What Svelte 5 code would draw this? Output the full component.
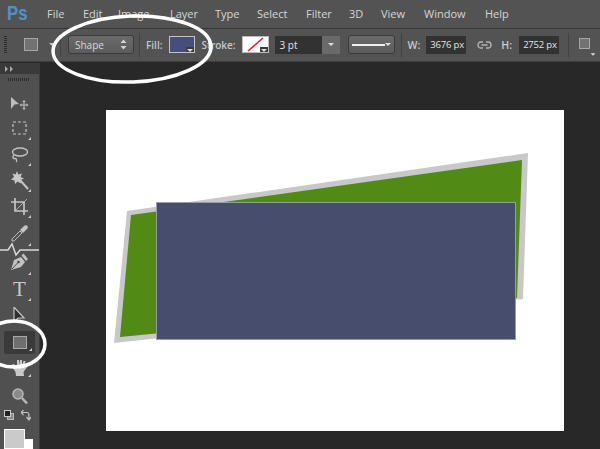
<script>
  const menus = [
    { label: 'File', w: 36 }, { label: 'Edit', w: 35 }, { label: 'Image', w: 52 }, { label: 'Layer', w: 45 },
    { label: 'Type', w: 42 }, { label: 'Select', w: 49 }, { label: 'Filter', w: 43 }, { label: '3D', w: 32 },
    { label: 'View', w: 43 }, { label: 'Window', w: 61 }, { label: 'Help', w: 40 }
  ];
</script>

<div class="app">
  <header class="menubar">
    <span class="logo"><span class="logo-text">Ps</span></span>
    <nav class="menus">
      {#each menus as m}
        <span class="menu" style="width:{m.w}px">{m.label}</span>
      {/each}
    </nav>
  </header>

  <div class="options">
    <span class="grip"></span>
    <span class="shape-preview"></span>
    <span class="caret"></span>
    <span class="sep first"></span>
    <div class="select shape-mode">
      <span>Shape</span>
      <svg width="7" height="11" viewBox="0 0 7 11"><path d="M3.500 0.500 6.500 4H.5ZM3.500 10.500 .5 7H6.500Z" fill="#d4d4d4"/></svg>
    </div>
    <span class="sep mode"></span>
    <span class="lbl fill-lbl">Fill:</span>
    <span class="swatch fill"><i class="corner"></i></span>
    <span class="lbl stroke-lbl">Stroke:</span>
    <span class="swatch stroke">
      <svg width="25" height="15" viewBox="0 0 25 15"><path d="M5 14 20 1" stroke="#d9232e" stroke-width="1.600"/></svg>
      <i class="corner"></i>
    </span>
    <div class="pt">
      <span class="pt-val">3 pt</span>
      <span class="pt-btn"><i class="tri"></i></span>
    </div>
    <div class="select line">
      <span class="line-bar"></span>
      <i class="tri"></i>
    </div>
    <span class="sep dims"></span>
    <span class="lbl w-lbl">W:</span>
    <span class="num">3676 px</span>
    <svg class="link" width="15" height="8" viewBox="0 0 15 8" fill="none" stroke="#b4b4b4" stroke-width="1.400">
      <path d="M6 1H3.500a2.500 3 0 0 0 0 6H6M9 1h2.500a2.500 3 0 0 1 0 6H9M4.500 4h6"/>
    </svg>
    <span class="lbl h-lbl">H:</span>
    <span class="num">2752 px</span>
    <span class="sep last"></span>
    <span class="shape-preview small"></span>
    <i class="tri tiny"></i>
  </div>

  <div class="body">
    <aside class="toolbar">
      <div class="tb-head">
        <svg width="8" height="6" viewBox="0 0 8 6"><path d="M0 0 3 3 0 6ZM5 0 8 3 5 6Z" fill="#a8a8a8"/></svg>
      </div>
      <div class="tb-grip"></div>

      <div class="tool t-move">
        <svg width="18" height="13" viewBox="0 0 18 13" fill="#bcbcbc">
          <path d="M0 0 8 7 3.500 7.500 0 12Z"/>
          <path d="M13 3 14.800 5H13.600V7.400H15.500V6.300L17.500 8 15.500 9.700V8.600H13.600V11H14.800L13 13 11.200 11H12.400V8.600H10.500V9.700L8.500 8 10.500 6.300V7.400H12.400V5H11.200Z"/>
        </svg>
      </div>
      <div class="tool">
        <svg width="15" height="14" viewBox="0 0 15 14" fill="none"><rect x="1" y="1" width="13" height="12" stroke="#c4c4c4" stroke-width="1.200" stroke-dasharray="3 2"/></svg>
        <i class="more"></i>
      </div>
      <div class="tool">
        <svg width="17" height="17" viewBox="0 0 17 17" fill="none" stroke="#c4c4c4" stroke-width="1.300">
          <ellipse cx="9" cy="6" rx="7.500" ry="4"/>
          <path d="M3 9C1 11 2 13 4 12.500 6 12 5 15 6 16"/>
        </svg>
        <i class="more"></i>
      </div>
      <div class="tool">
        <svg width="18" height="19" viewBox="0 0 18 19">
          <path d="M6 0 7.300 3.500 11 2.500 9.500 6 13 7.500 9.500 9 10 12.500 6.500 10.500 4 13 3.500 9.500 0 8.500 3 6 1.500 2.500 4.700 3.500Z" fill="#c8c8c8"/>
          <path d="M9 9 17 18" stroke="#c4c4c4" stroke-width="2"/>
        </svg>
        <i class="more"></i>
      </div>
      <div class="tool">
        <svg width="17" height="17" viewBox="0 0 17 17" fill="none" stroke="#c4c4c4" stroke-width="1.700">
          <path d="M4 0V13H17M0 4H13V17"/><path d="M4 13 13 4M13 4 16 1" stroke-width=".8"/>
        </svg>
        <i class="more"></i>
      </div>
      <div class="tool t-dropper">
        <svg width="17" height="17" viewBox="0 0 17 17">
          <path d="M1 16 1 14 9 6 11 8 3 16Z" fill="none" stroke="#bdbdbd" stroke-width="1"/>
          <path d="M9 5 13 1C14 0 16 0 16.500 1 17 2 17 3 16 4L12 8Z" fill="#c4c4c4"/>
        </svg>
        <i class="more"></i>
      </div>
      <div class="tool t-pen">
        <svg width="17" height="18" viewBox="0 0 17 18">
          <path d="M0 17 3 7 10 4 14 9 10 14Z" fill="#c2c2c2"/>
          <path d="M1 16 7 9.500" stroke="#4a4a4a" stroke-width="1"/>
          <circle cx="7.500" cy="9" r="1.300" fill="#4a4a4a"/>
          <path d="M10.500 2.500 12.500 0.500 17 6 15 8Z" fill="#c2c2c2"/>
        </svg>
        <i class="more"></i>
      </div>
      <div class="tool">
        <span class="t-glyph">T</span>
        <i class="more"></i>
      </div>
      <div class="tool t-path">
        <svg width="13" height="16" viewBox="0 0 13 16"><path d="M1 0V15L5 11 11 11Z" fill="#2e2e2e" stroke="#c4c4c4" stroke-width="1.200"/></svg>
      </div>
      <div class="tool t-rect">
        <span class="rect-icon"></span>
        <i class="more"></i>
      </div>
      <div class="tool t-hand">
        <svg width="18" height="16" viewBox="0 0 18 16">
          <path d="M0 5 3 4 6 7V0H8V5L9 0H11V5L12.500 1H14.500L13.500 6 15.500 4 17.500 5 12.500 12 13 16H5L4.500 12Z" fill="#c8c8c8"/>
        </svg>
        <i class="more"></i>
      </div>
      <div class="tool t-zoom">
        <svg width="16" height="17" viewBox="0 0 16 17">
          <circle cx="6" cy="6" r="5" fill="#8a8a8a" stroke="#b8b8b8" stroke-width="1.500"/>
          <path d="M10 10 15 15.500" stroke="#b8b8b8" stroke-width="2.500"/>
        </svg>
      </div>
      <div class="tool-pair">
        <svg width="10" height="10" viewBox="0 0 10 10"><rect x="3.500" y="3.500" width="6" height="6" fill="#8b8b8b" stroke="#bbb"/><rect x=".5" y=".5" width="6" height="6" fill="#222" stroke="#ccc"/></svg>
        <svg width="10" height="11" viewBox="0 0 10 11" fill="none" stroke="#c4c4c4" stroke-width="1.200"><path d="M0 2.500H6C8 2.500 8 4 8 9M2.500 0 0 2.500 2.500 5M5.500 7 8 10 10 7"/></svg>
      </div>
      <div class="colors">
        <span class="bg-color"></span>
        <span class="fg-color"></span>
      </div>
    </aside>

    <main class="workspace">
      <div class="canvas">
        <svg class="art" width="458" height="321" viewBox="106 110 458 321">
          <path d="M127 211 528 153 523 299 114 343Z" fill="#c8c8c8"/>
          <path d="M131 215 522 160 517 298 120 337Z" fill="#528a16"/>
          <rect x="156.500" y="202.500" width="359" height="137" fill="#474d6d" stroke="#9a9ca4"/>
        </svg>
      </div>
    </main>
  </div>

  <svg class="marks" width="600" height="449" viewBox="0 0 600 449" fill="none" stroke="#fff">
    <ellipse cx="132" cy="49" rx="79" ry="33" stroke-width="3.500" transform="rotate(-2 132 49)"/>
    <path d="M0 250H8L12 244 16 255 20 250H39" stroke="#d8d8d8" stroke-width="1.500"/>
    <ellipse cx="14" cy="344" rx="31" ry="23" stroke-width="3.500"/>
  </svg>
</div>

<style>
:global(body) {
	margin: 0;
	background: #282828;
}
.app {
	position: relative;
	width: 600px;
	height: 449px;
	overflow: hidden;
	display: flex;
	flex-direction: column;
	font-family: "Open Sans", "Liberation Sans", sans-serif;
	color: #d0d0d0;
}
.menubar {
	height: 28px;
	display: flex;
	align-items: center;
	background: #535353;
	border-bottom: 1px solid #383838;
	flex-shrink: 0;
}
.logo {
	width: 47px;
	padding-left: 7px;
	box-sizing: border-box;
	margin-bottom: 2px;
}
.logo-text {
	display: inline-block;
	font: bold 21px "Liberation Sans", sans-serif;
	color: #4f92c9;
	transform: scaleX(.8);
	transform-origin: left center;
}
.menus {
	display: flex;
	margin-bottom: 2px;
}
.menu {
	font-size: 11px;
	color: #d6d6d6;
}
.options {
	height: 33px;
	display: flex;
	align-items: center;
	background: #535353;
	border-bottom: 1px solid #3e3e3e;
	flex-shrink: 0;
	font-size: 10px;
	padding-bottom: 1px;
	box-sizing: border-box;
}
.grip {
	width: 3px;
	height: 18px;
	margin-left: 4px;
	background: repeating-linear-gradient(#2c2c2c 0 1px, transparent 1px 2px);
}
.shape-preview {
	width: 12px;
	height: 11px;
	margin-left: 17px;
	border: 1px solid #a8a8a8;
	background: #727272;
}
.shape-preview.small {
	width: 9px;
	height: 9px;
	margin-left: 10px;
	margin-bottom: 3px;
}
.caret {
	width: 0;
	height: 0;
	margin-left: 11px;
	border: 3px solid transparent;
	border-top: 3px solid #c8c8c8;
	border-bottom: 0;
}
.sep {
	width: 1px;
	height: 24px;
	background: #424242;
}
.sep.first {
	margin: 0 7px 0 5px;
}
.sep.mode {
	margin: 0 6px 0 5px;
}
.sep.dims {
	margin: 0 6px 0 6px;
}
.sep.last {
	margin: 0 0 0 9px;
}
.select {
	display: flex;
	align-items: center;
	justify-content: space-between;
	box-sizing: border-box;
	height: 19px;
	border: 1px solid #3a3a3a;
	border-radius: 3px;
	background: linear-gradient(#6a6a6a, #5c5c5c);
}
.shape-mode {
	width: 66px;
	padding: 0 6px;
	color: #d8d8d8;
	font-size: 10px;
}
.lbl {
	font-weight: 600;
	color: #c8c8c8;
	font-size: 10px;
}
.swatch {
	position: relative;
	display: block;
	box-sizing: border-box;
	width: 26px;
	height: 17px;
	flex-shrink: 0;
}
.swatch.fill {
	margin-left: 7px;
	background: #474d7c;
	border: 1px solid #c4c4c4;
}
.stroke-lbl {
	margin-left: 6px;
}
.swatch.stroke {
	margin-left: 6px;
	width: 27px;
	background: #fff;
	border: 1px solid #bcbcbc;
}
.swatch svg {
	display: block;
}
.corner {
	position: absolute;
	right: 0;
	bottom: 0;
	width: 8px;
	height: 5px;
	background: #3c3c3c;
}
.corner::after {
	content: "";
	position: absolute;
	left: 1px;
	top: 2px;
	border: 3px solid transparent;
	border-top: 3px solid #ddd;
	border-bottom: 0;
}
.pt {
	display: flex;
	width: 65px;
	height: 18px;
	margin-left: 6px;
}
.pt-val {
	flex: 1;
	background: #323232;
	color: #e4e4e4;
	line-height: 18px;
	padding-left: 5px;
}
.pt-btn {
	display: flex;
	align-items: center;
	justify-content: center;
	width: 18px;
	background: #6a6a6a;
}
.tri {
	display: block;
	width: 0;
	height: 0;
	border: 3px solid transparent;
	border-top: 3px solid #ddd;
	border-bottom: 0;
}
.tri.tiny {
	margin: 20px 0 0 0;
	transform: scale(.8);
}
.select.line {
	width: 47px;
	margin-left: 8px;
	padding: 0 3px;
}
.line-bar {
	width: 33px;
	height: 2px;
	background: #f0f0f0;
}
.w-lbl {
	font-size: 10.500px;
}
.num {
	box-sizing: border-box;
	width: 40px;
	height: 18px;
	margin-left: 6px;
	background: #323232;
	color: #e4e4e4;
	font-size: 9.500px;
	letter-spacing: -0.2px;
	line-height: 18px;
	padding-left: 4px;
	white-space: nowrap;
}
.link {
	margin: 0 9px 0 11px;
	flex-shrink: 0;
}
.h-lbl {
	font-size: 10.500px;
	margin-right: 1px;
}
.body {
	flex: 1;
	display: flex;
	min-height: 0;
}
.toolbar {
	width: 40px;
	flex-shrink: 0;
	background: #505050;
	border-right: 1px solid #3a3a3a;
	display: flex;
	flex-direction: column;
	align-items: stretch;
	margin-top: 1px;
	box-sizing: border-box;
}
.tb-head {
	height: 11px;
	background: #3a3a3a;
	display: flex;
	align-items: center;
	padding-left: 5px;
}
.tb-grip {
	height: 3px;
	margin: 4px 10px 10px 8px;
	background: repeating-linear-gradient(90deg, #2c2c2c 0 1px, transparent 1px 2px);
}
.tool {
	position: relative;
	height: 26px;
	display: flex;
	align-items: center;
	justify-content: center;
	flex-shrink: 0;
}
.more {
	position: absolute;
	right: 8px;
	bottom: 1px;
	width: 0;
	height: 0;
	border-left: 3px solid transparent;
	border-bottom: 3px solid #ccc;
}
.t-move {
	height: 24px;
}
.t-dropper {
	height: 28px;
}
.t-pen {
	height: 29px;
}
.t-glyph {
	font: 21px "Liberation Serif", serif;
	color: #c8c8c8;
	line-height: 1;
}
.t-path {
	height: 25px;
}
.t-rect {
	height: 23px;
	margin: 4px 4px 3px 4px;
	background: #3a3a3a;
	border-radius: 2px;
}
.t-rect .more {
	right: 3px;
	bottom: 3px;
}
.rect-icon {
	width: 12px;
	height: 11px;
	border: 1px solid #a9a9a9;
	background: #6f6f6f;
}
.t-hand {
	height: 21px;
}
.t-zoom {
	height: 32px;
	padding-top: 4px;
	box-sizing: border-box;
}
.tool-pair {
	display: flex;
	justify-content: space-between;
	padding: 0 8px 0 4px;
	height: 14px;
	flex-shrink: 0;
}
.colors {
	position: relative;
	height: 25px;
}
.bg-color {
	position: absolute;
	left: 15px;
	top: 15px;
	width: 18px;
	height: 18px;
	background: #fff;
}
.fg-color {
	position: absolute;
	left: 4px;
	top: 5px;
	width: 19px;
	height: 18px;
	background: #cacaca;
	border: 1px solid #fff;
}
.workspace {
	flex: 1;
	padding: 48px 0 0 66px;
	background: #282828;
}
.canvas {
	width: 458px;
	height: 321px;
	background: #fff;
}
.art {
	display: block;
}
.marks {
	position: absolute;
	inset: 0;
	pointer-events: none;
}
</style>
